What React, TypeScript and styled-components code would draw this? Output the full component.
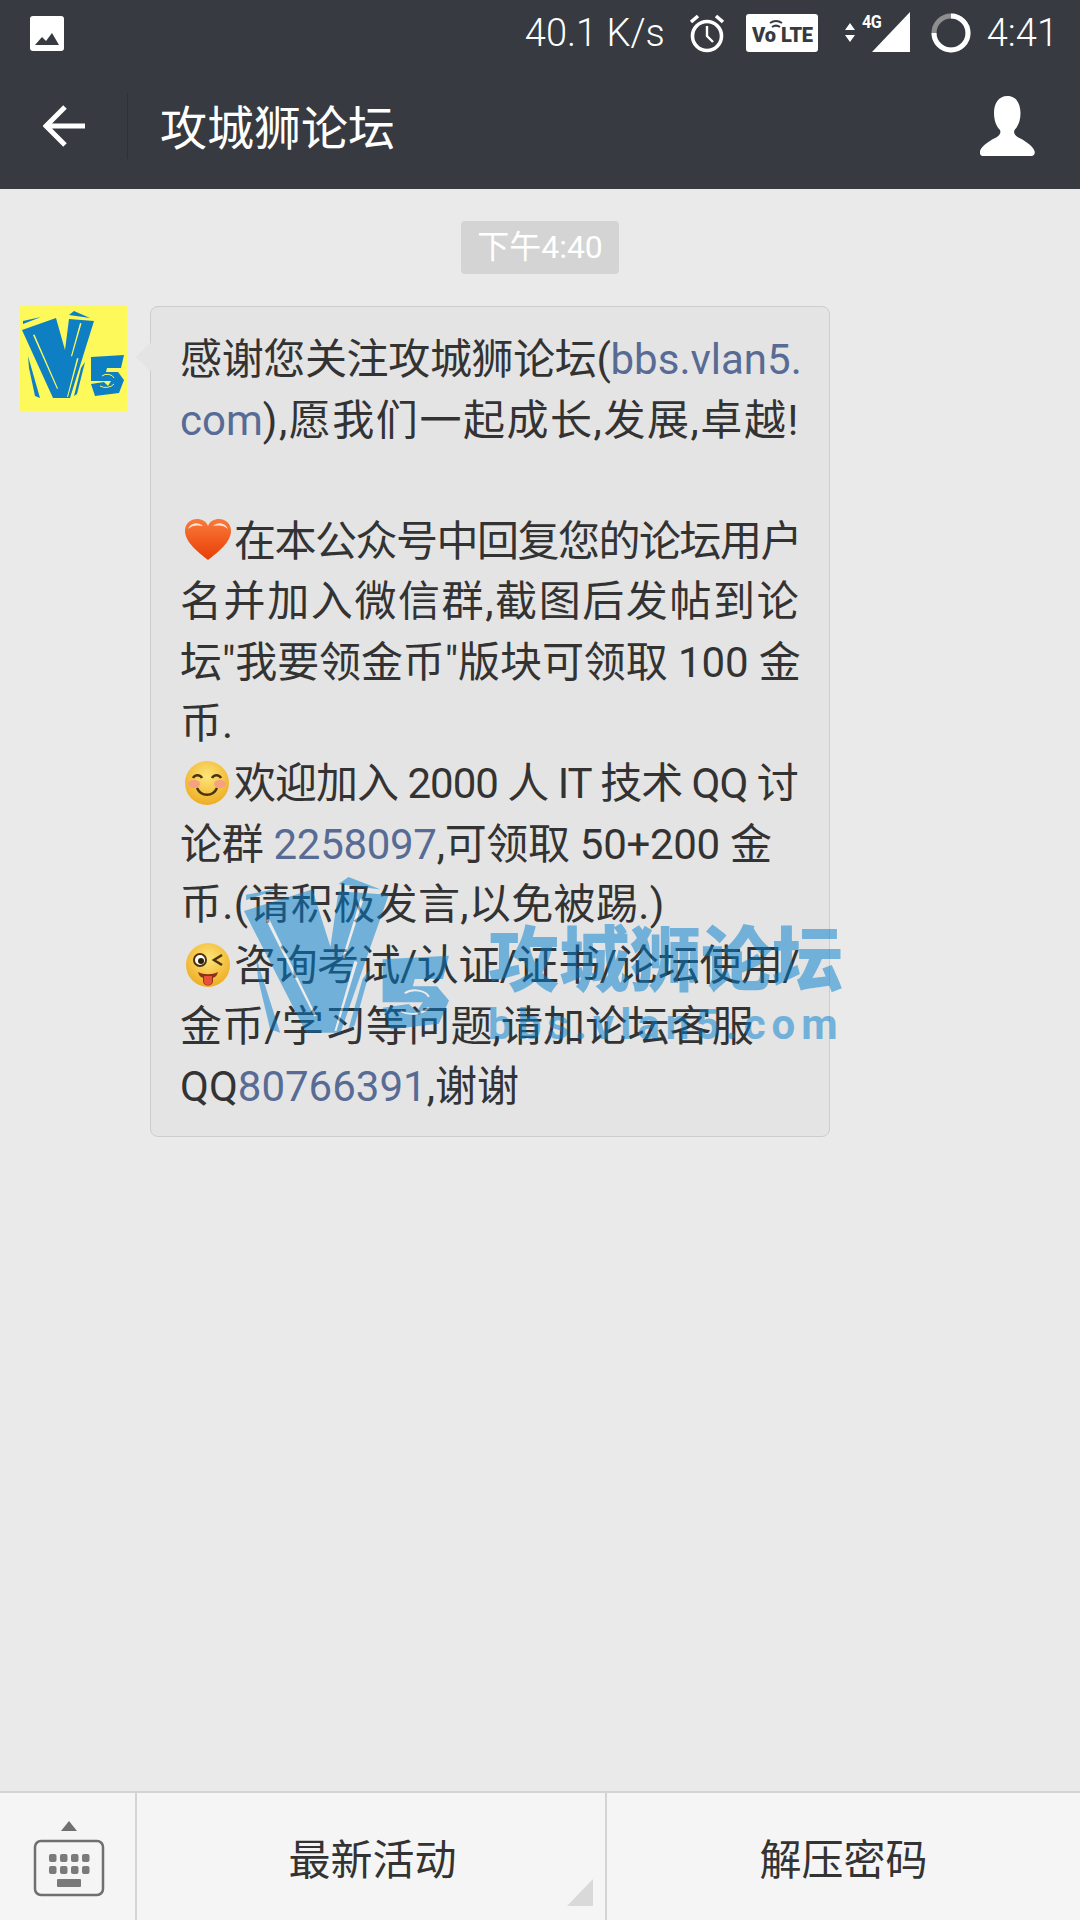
import React from "react";
import styled, { createGlobalStyle } from "styled-components";

const GlobalStyle = createGlobalStyle`
  html, body {
    margin: 0;
    padding: 0;
    background: #e9e9e9;
  }
  * {
    box-sizing: border-box;
  }
`;

const FONT = `Roboto, "Noto Sans CJK SC", sans-serif`;

const StyledPage = styled.div`
  position: relative;
  width: 1080px;
  height: 1920px;
  display: flex;
  flex-direction: column;
  overflow: hidden;
  background-color: #eaeaea;
  font-family: ${FONT};
`;

const StyledHeader = styled.header`
  height: 189px;
  flex: none;
  background-color: #373a40;
  color: #fff;
`;

const StyledStatusBar = styled.div`
  height: 63px;
  display: flex;
  align-items: center;
  padding: 3px 22px 0 30px;
`;

const StyledStatusLeft = styled.div`
  flex: 1;
  display: flex;
`;

const StyledSpeed = styled.span`
  font-size: 38px;
  font-weight: 300;
  margin-right: 24px;
`;

const StyledClock = styled.span`
  font-size: 38px;
  font-weight: 300;
  margin-left: 16px;
`;

const StyledStatusIcon = styled.svg<{ $gap: number }>`
  display: block;
  flex: none;
  margin-right: ${(p) => p.$gap}px;
`;

const StyledNetwork = styled.div`
  position: relative;
  width: 65px;
  height: 42px;
  margin-right: 21px;
  flex: none;
`;

const StyledNetworkLabel = styled.span`
  position: absolute;
  left: 17px;
  top: -1px;
  font-size: 19px;
  font-weight: 700;
  letter-spacing: -0.5px;
  transform: scaleX(0.85);
  transform-origin: left top;
  line-height: 22px;
`;

const StyledNavBar = styled.nav`
  height: 126px;
  display: flex;
  align-items: center;
  padding-right: 45px;
`;

const StyledBack = styled.div`
  width: 127px;
  padding-left: 43px;
  flex: none;
`;

const StyledNavDivider = styled.div`
  width: 1px;
  height: 66px;
  background-color: #2e3035;
  flex: none;
`;

const StyledTitle = styled.h1`
  flex: 1;
  margin: 0 0 4px 32px;
  font-size: 47px;
  font-weight: 400;
  color: #fff;
`;

const StyledChat = styled.main`
  flex: 1;
  display: flex;
  flex-direction: column;
  padding-top: 32px;
`;

const StyledTimeRow = styled.div`
  display: flex;
  justify-content: center;
  margin-bottom: 32px;
`;

const StyledTime = styled.div`
  width: 158px;
  height: 53px;
  border-radius: 4px;
  background-color: #d4d4d4;
  color: #fff;
  font-size: 32px;
  line-height: 53px;
  text-align: center;
`;

const StyledMessage = styled.div`
  display: flex;
  align-items: flex-start;
  padding-left: 20px;
`;

const StyledAvatar = styled.div`
  width: 107px;
  height: 105px;
  flex: none;
  margin-right: 23px;
  background-color: #fdf95a;
`;

const StyledBubble = styled.div`
  position: relative;
  width: 680px;
  padding: 23px 20px 18px 29px;
  border: 1px solid #cdcdcd;
  border-radius: 8px;
  background-color: #e4e4e4;
  color: #333;
  font-size: 42px;

  &::before {
    content: "";
    position: absolute;
    left: -11px;
    top: 40px;
    width: 20px;
    height: 20px;
    background-color: #e4e4e4;
    transform: rotate(45deg);
  }
`;

const StyledLine = styled.div<{ $spread?: number }>`
  height: 60.6px;
  line-height: 60.6px;
  white-space: pre;
  letter-spacing: ${(p) => p.$spread ?? 0}px;
`;

const StyledLink = styled.span<{ $plain?: boolean }>`
  color: #576b95;
  ${(p) => (p.$plain ? "letter-spacing: 0;" : "")}
`;

const StyledEmoji = styled.svg`
  display: inline-block;
  width: 48px;
  height: 46px;
  margin: 0 2px 0 4px;
  vertical-align: -8px;
`;

const StyledWatermark = styled.div`
  position: absolute;
  left: 240px;
  top: 868px;
  width: 610px;
  height: 190px;
  display: flex;
  color: #007ece;
  opacity: 0.5;
  pointer-events: none;
`;

const StyledWatermarkText = styled.div`
  display: flex;
  flex-direction: column;
  margin-left: 33px;
  padding-top: 53px;
`;

const StyledWatermarkTitle = styled.div`
  font-size: 71px;
  font-weight: 900;
  line-height: 80px;
  white-space: nowrap;
`;

const StyledWatermarkUrl = styled.div`
  margin-top: 4px;
  font-size: 42px;
  font-weight: 700;
  line-height: 40px;
  letter-spacing: 6px;
  white-space: nowrap;
`;

const StyledFooter = styled.footer`
  height: 129px;
  flex: none;
  display: flex;
  background-color: #f5f5f5;
  border-top: 2px solid #d4d4d4;
`;

const StyledKeyboard = styled.div`
  width: 137px;
  flex: none;
  display: flex;
  justify-content: center;
  padding: 26px 0 0 2px;
  border-right: 2px solid #d4d4d4;
`;

const StyledMenuItem = styled.div<{ $last?: boolean }>`
  position: relative;
  flex: ${(p) => (p.$last ? "1" : "none")};
  width: ${(p) => (p.$last ? "auto" : "470px")};
  display: flex;
  align-items: center;
  justify-content: center;
  padding-left: ${(p) => (p.$last ? "0" : "3px")};
  font-size: 42px;
  color: #333;
  border-right: ${(p) => (p.$last ? "none" : "2px solid #d4d4d4")};
`;

const StyledCorner = styled.svg`
  position: absolute;
  right: 12px;
  bottom: 14px;
`;

const ImageIcon = () => (
  <svg width="34" height="35" viewBox="0 0 34 35">
    <rect width="34" height="35" rx="3" fill="#fff" />
    <path d="M5 29l7-8 4 4 6-8 7 12z" fill="#373a40" />
  </svg>
);

const AlarmIcon = () => (
  <StyledStatusIcon $gap={21} width="36" height="40" viewBox="0 0 36 40">
    <circle cx="18" cy="23" r="14.5" fill="none" stroke="#fff" strokeWidth="3.6" />
    <path d="M18 13v10l6 6" fill="none" stroke="#fff" strokeWidth="2.4" />
    <path d="M2 9l7-6M34 9l-7-6" fill="none" stroke="#fff" strokeWidth="3.6" />
  </StyledStatusIcon>
);

const VolteIcon = () => (
  <StyledStatusIcon $gap={27} width="72" height="38" viewBox="0 0 72 38">
    <rect width="72" height="38" rx="3" fill="#fff" />
    <text x="6" y="28" fontFamily={FONT} fontSize="20" fontWeight="900" fill="#373a40">
      Vo
    </text>
    <path d="M26 13a7 7 0 0 1 8 0M24 9a11 11 0 0 1 12 0" fill="none" stroke="#373a40" strokeWidth="2" />
    <text x="35" y="28" fontFamily={FONT} fontSize="20" fontWeight="900" fill="#373a40" textLength="32">
      LTE
    </text>
  </StyledStatusIcon>
);

const NetworkIcon = () => (
  <StyledNetwork>
    <svg width="65" height="42" viewBox="0 0 65 42">
      <path d="M0 18l5-7 5 7zM0 23l5 7 5-7z" fill="#fff" />
      <path d="M27 40L65 0v40z" fill="#fff" />
    </svg>
    <StyledNetworkLabel>4G</StyledNetworkLabel>
  </StyledNetwork>
);

const RingIcon = () => (
  <StyledStatusIcon $gap={0} width="40" height="42" viewBox="0 0 40 42">
    <circle cx="20" cy="21" r="17" fill="none" stroke="#8d8e90" strokeWidth="5" />
    <path d="M20 4a17 17 0 1 1-17 17" fill="none" stroke="#fff" strokeWidth="5" />
  </StyledStatusIcon>
);

const BackIcon = () => (
  <svg width="42" height="44" viewBox="0 0 42 44" style={{ display: "block" }}>
    <path d="M42 22H4M22 3L3 22l19 19" fill="none" stroke="#fff" strokeWidth="5" />
  </svg>
);

const PersonIcon = () => (
  <svg width="55" height="60" viewBox="0 0 55 60">
    <path
      d="M27.500 0c9 0 13 8 13 17 0 7-2 13-6 17-1 3 0 5 3 7 6 3 15 8 17 14 1 3-1 5-3 5H3c-2 0-4-2-3-5 2-6 11-11 17-14 3-2 4-4 3-7-4-4-6-10-6-17 0-9 4-17 13.500-17z"
      fill="#fff"
    />
  </svg>
);

const V5Logo = (props: { width: number; height: number; color: string; bg: string }) => {
  const { width, height, color, bg } = props;
  return (
    <svg
      width={width}
      height={height}
      viewBox="0 0 107 105"
      preserveAspectRatio="none"
      style={{ display: "block", flex: "none" }}
    >
      <path d="M2 24L36 12 45 44 49 13 74 15 50 92H33z" fill={color} />
      <path d="M3 18L21 11 3 15zM49 9l21 3-16-7z" fill={color} />
      <path d="M8 50L20 92 15 90 9 62zM61 62L54 90 57 88 65 56z" fill={color} />
      <path d="M13 29L37 83 38 82.500 14.500 28.500zM60 17L51 50 52 50.500 61.500 17.500zM57 52L47 91 48 91 58.500 52.500z" fill={bg} />
      <path d="M71 51L104 49 101 62H87L86 66H98L104 74 99 87 75 90 71 78 84 76 88 80 91 75H71z" fill={color} />
      <path d="M82 70a7 5 0 0 1 12 2M80 80a10 8 0 0 0 14-2" fill="none" stroke={bg} strokeWidth="1" />
    </svg>
  );
};

const HeartEmoji = () => (
  <StyledEmoji viewBox="0 0 48 46">
    <defs>
      <linearGradient id="heart" x1="0" y1="0" x2="0" y2="1">
        <stop offset="0" stopColor="#f97a3c" />
        <stop offset="1" stopColor="#e83e04" />
      </linearGradient>
    </defs>
    <path
      d="M24 42C14 34 1 24 1 13 1 5 7 1 13 1c5 0 9 2 11 7 2-5 6-7 11-7 6 0 12 4 12 12 0 11-13 21-23 29z"
      fill="url(#heart)"
    />
    <path d="M4 11c2-6 10-8 15-3-5-1-11-1-15 3zM44 11c-2-6-10-8-15-3 5-1 11-1 15 3z" fill="#fde0d0" />
  </StyledEmoji>
);

const SmileEmoji = () => (
  <StyledEmoji viewBox="0 0 48 46">
    <defs>
      <radialGradient id="face" cx="0.5" cy="0.35" r="0.7">
        <stop offset="0" stopColor="#fde67a" />
        <stop offset="1" stopColor="#eda81c" />
      </radialGradient>
    </defs>
    <circle cx="23" cy="23" r="22" fill="url(#face)" />
    <ellipse cx="10" cy="24" rx="6" ry="4" fill="#f5a184" />
    <ellipse cx="36" cy="24" rx="6" ry="4" fill="#f5a184" />
    <path d="M9 18a5 5 0 0 1 9 0M28 18a5 5 0 0 1 9 0M13 28c4 9 16 9 20 0" fill="none" stroke="#4a3410" strokeWidth="2.500" />
  </StyledEmoji>
);

const WinkEmoji = () => (
  <StyledEmoji viewBox="0 0 48 46">
    <circle cx="24" cy="23" r="22" fill="url(#face)" />
    <circle cx="16" cy="18" r="6" fill="#fff" stroke="#4a3410" strokeWidth="2" />
    <circle cx="17" cy="19" r="3" fill="#2c1d08" />
    <path d="M38 13l-8 5 8 5" fill="none" stroke="#4a3410" strokeWidth="2.500" />
    <path d="M14 30c6 3 14 3 20 0-1 4-3 5-5 6v3c0 6-10 6-10 0v-3c-2-1-4-2-5-6z" fill="#8a3218" />
    <path d="M20 34h8v6c0 4-8 4-8 0z" fill="#e8503a" />
  </StyledEmoji>
);

const KeyboardIcon = () => (
  <svg width="72" height="86" viewBox="0 0 72 86">
    <path d="M28 12l8-10 8 10z" fill="#6f6f6f" />
    <rect x="2" y="22" width="68" height="54" rx="6" fill="none" stroke="#6f6f6f" strokeWidth="2.500" />
    {[0, 1, 2, 3].map((i) => (
      <React.Fragment key={i}>
        <rect x={16 + i * 11} y="35" width="7.500" height="8" rx="2" fill="#7a7a7a" />
        <rect x={16 + i * 11} y="47" width="7.500" height="8" rx="2" fill="#7a7a7a" />
      </React.Fragment>
    ))}
    <rect x="24" y="60" width="24" height="8" rx="1" fill="#7a7a7a" />
  </svg>
);

const App = () => {
  return (
    <StyledPage>
      <GlobalStyle />
      <StyledHeader>
        <StyledStatusBar>
          <StyledStatusLeft>
            <ImageIcon />
          </StyledStatusLeft>
          <StyledSpeed>40.1 K/s</StyledSpeed>
          <AlarmIcon />
          <VolteIcon />
          <NetworkIcon />
          <RingIcon />
          <StyledClock>4:41</StyledClock>
        </StyledStatusBar>
        <StyledNavBar>
          <StyledBack>
            <BackIcon />
          </StyledBack>
          <StyledNavDivider />
          <StyledTitle>攻城狮论坛</StyledTitle>
          <PersonIcon />
        </StyledNavBar>
      </StyledHeader>

      <StyledChat>
        <StyledTimeRow>
          <StyledTime>下午4:40</StyledTime>
        </StyledTimeRow>
        <StyledMessage>
          <StyledAvatar>
            <V5Logo width={107} height={105} color="#0f7fc4" bg="#fdf95a" />
          </StyledAvatar>
          <StyledBubble>
            <StyledLine $spread={-0.35}>
              感谢您关注攻城狮论坛(<StyledLink $plain>bbs.vlan5.</StyledLink>
            </StyledLine>
            <StyledLine $spread={1.55}>
              <StyledLink $plain>com</StyledLink>),愿我们一起成长,发展,卓越!
            </StyledLine>
            <StyledLine />
            <StyledLine $spread={-1.5}>
              <HeartEmoji />
              在本公众号中回复您的论坛用户
            </StyledLine>
            <StyledLine $spread={1.6}>名并加入微信群,截图后发帖到论</StyledLine>
            <StyledLine $spread={-0.1}>坛"我要领金币"版块可领取 100 金</StyledLine>
            <StyledLine>币.</StyledLine>
            <StyledLine $spread={-1}>
              <SmileEmoji />
              欢迎加入 2000 人 IT 技术 QQ 讨
            </StyledLine>
            <StyledLine $spread={-0.3}>
              论群 <StyledLink>2258097</StyledLink>,可领取 50+200 金
            </StyledLine>
            <StyledLine $spread={0.35}>币.(请积极发言,以免被踢.)</StyledLine>
            <StyledLine $spread={-0.5}>
              <WinkEmoji />
              咨询考试/认证/证书/论坛使用/
            </StyledLine>
            <StyledLine $spread={0.15}>金币/学习等问题,请加论坛客服</StyledLine>
            <StyledLine>
              QQ<StyledLink>80766391</StyledLink>,谢谢
            </StyledLine>
          </StyledBubble>
        </StyledMessage>
      </StyledChat>

      <StyledFooter>
        <StyledKeyboard>
          <KeyboardIcon />
        </StyledKeyboard>
        <StyledMenuItem>
          最新活动
          <StyledCorner width="26" height="27" viewBox="0 0 26 27">
            <path d="M26 0v27H0z" fill="#d9d9d9" />
          </StyledCorner>
        </StyledMenuItem>
        <StyledMenuItem $last>解压密码</StyledMenuItem>
      </StyledFooter>

      <StyledWatermark>
        <V5Logo width={215} height={188} color="#007ece" bg="#f4f4f4" />
        <StyledWatermarkText>
          <StyledWatermarkTitle>攻城狮论坛</StyledWatermarkTitle>
          <StyledWatermarkUrl>bbs.vlan5.com</StyledWatermarkUrl>
        </StyledWatermarkText>
      </StyledWatermark>
    </StyledPage>
  );
};

export default App;
